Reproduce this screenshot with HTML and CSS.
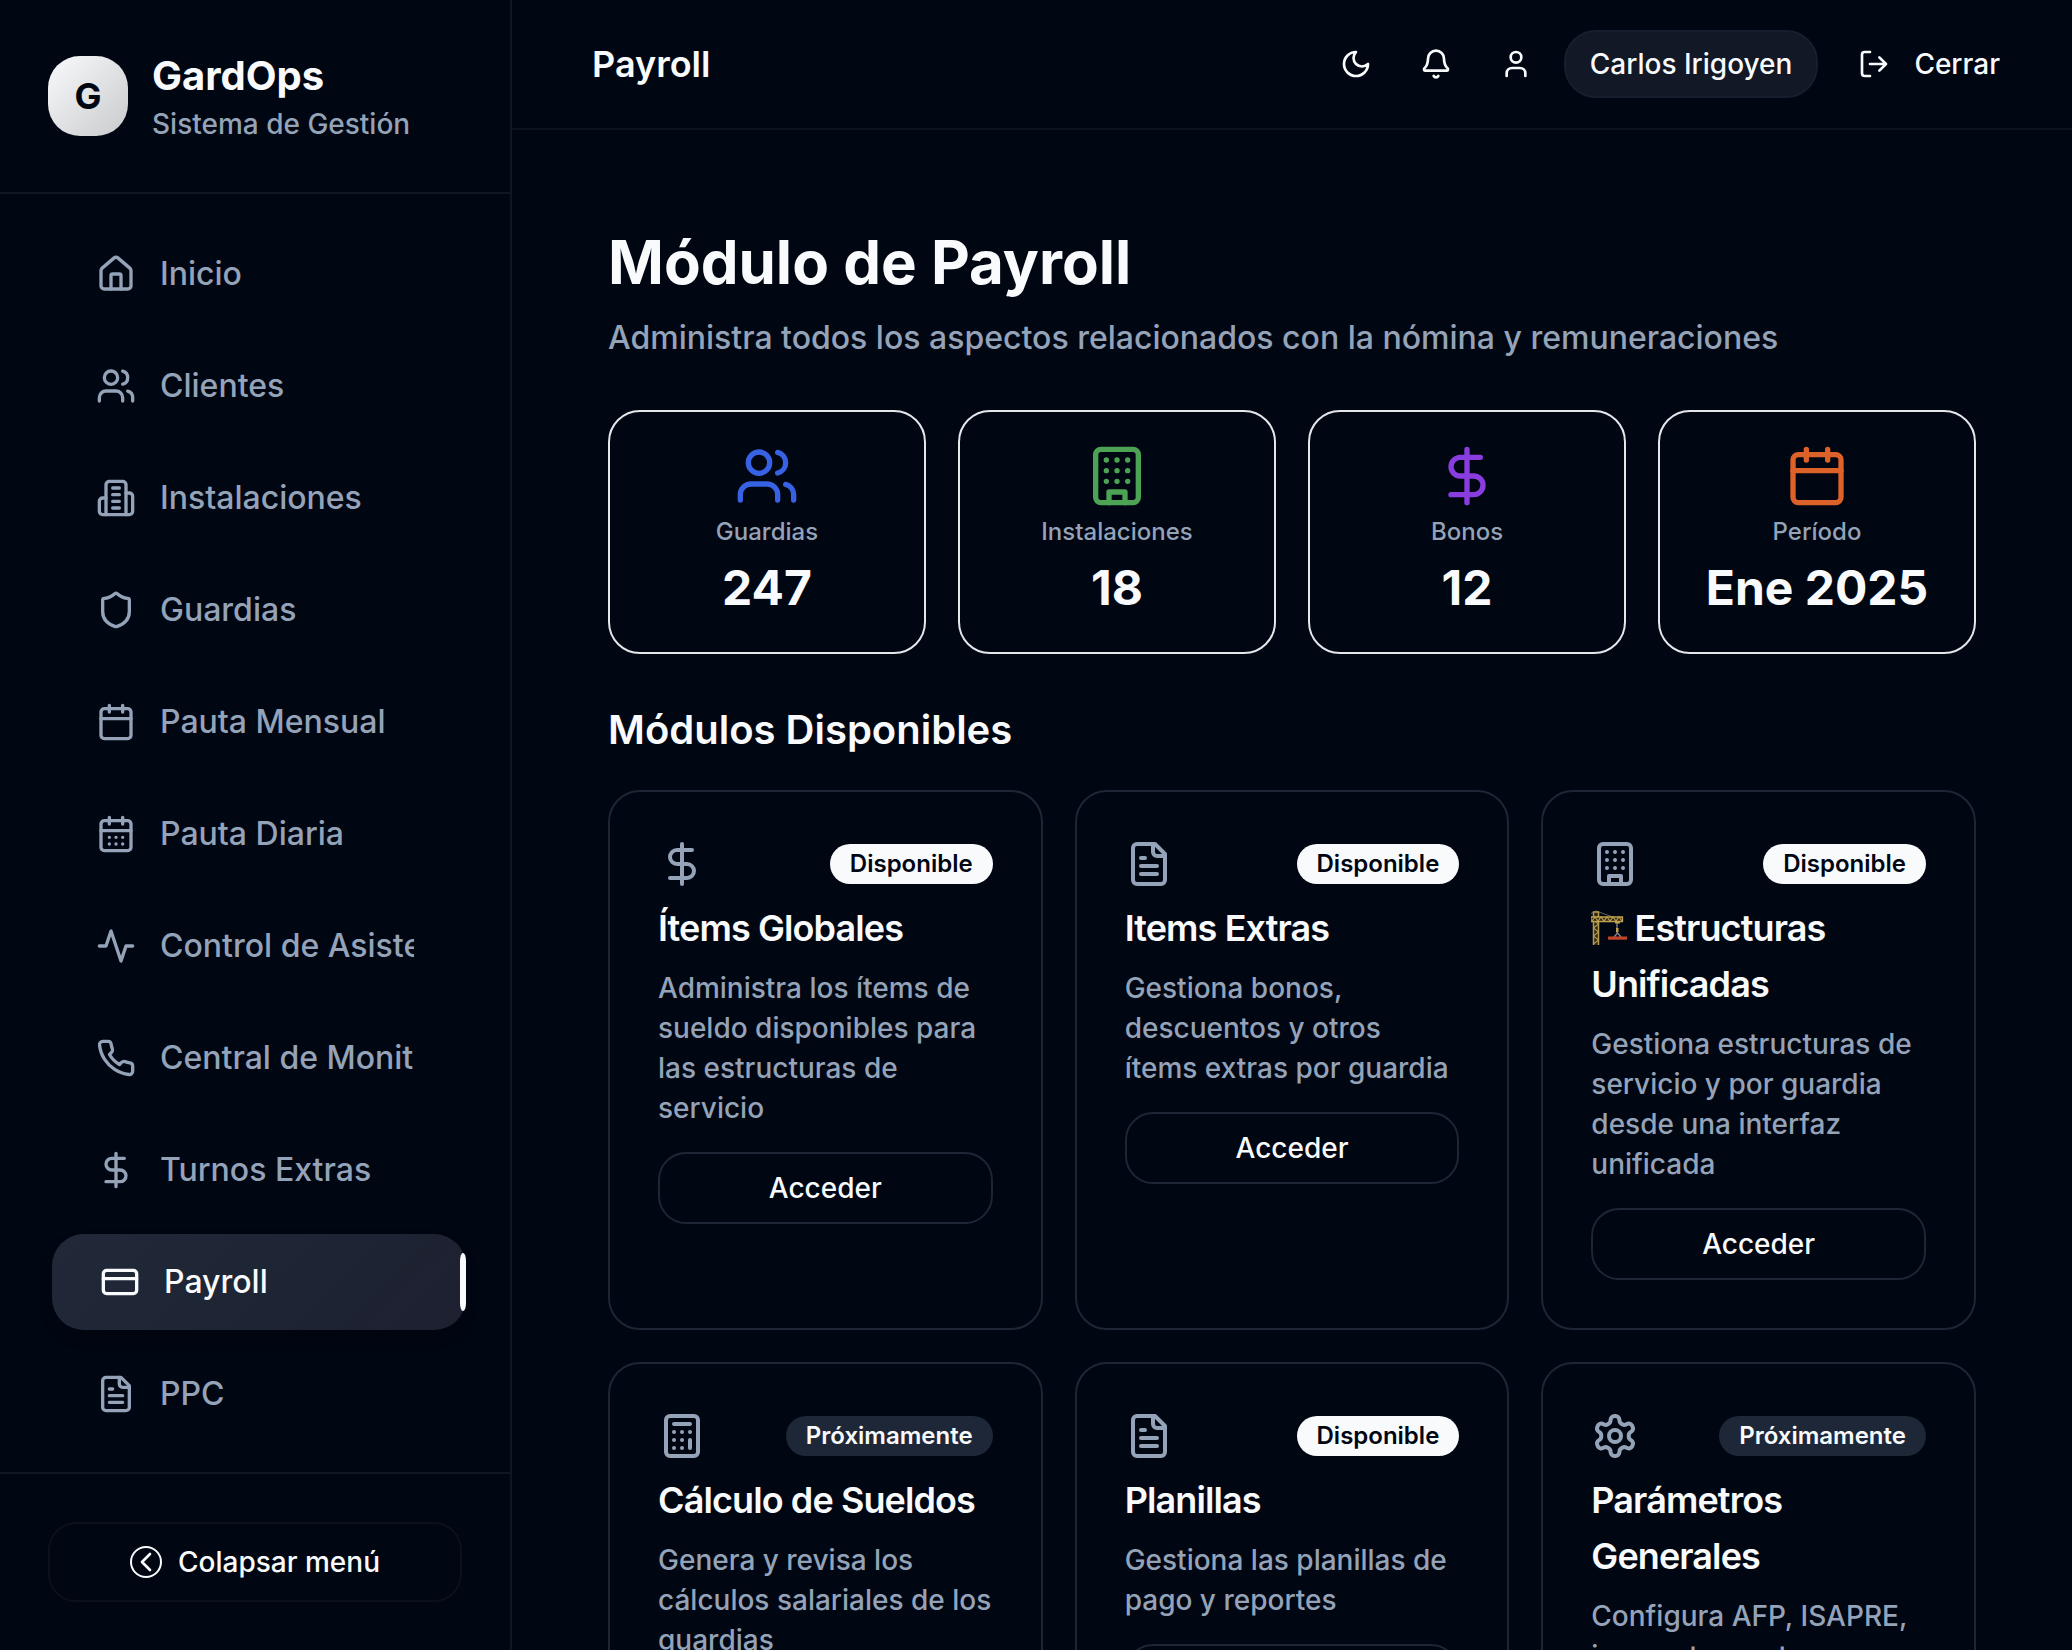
FILE: index.html
```html
<!DOCTYPE html>
<html lang="es">
<head>
<meta charset="utf-8">
<title>GardOps - Payroll</title>
<link rel="stylesheet" href="styles.css">
</head>
<body>
<svg class="sprite" aria-hidden="true">
  <symbol id="house" viewBox="0 0 24 24"><path d="M15 21v-8a1 1 0 0 0-1-1h-4a1 1 0 0 0-1 1v8"/><path d="M3 10a2 2 0 0 1 .709-1.528l7-5.999a2 2 0 0 1 2.582 0l7 5.999A2 2 0 0 1 21 10v9a2 2 0 0 1-2 2H5a2 2 0 0 1-2-2z"/></symbol>
  <symbol id="users" viewBox="0 0 24 24"><path d="M16 21v-2a4 4 0 0 0-4-4H6a4 4 0 0 0-4 4v2"/><circle cx="9" cy="7" r="4"/><path d="M22 21v-2a4 4 0 0 0-3-3.87"/><path d="M16 3.13a4 4 0 0 1 0 7.75"/></symbol>
  <symbol id="building2" viewBox="0 0 24 24"><path d="M6 22V4a2 2 0 0 1 2-2h8a2 2 0 0 1 2 2v18Z"/><path d="M6 12H4a2 2 0 0 0-2 2v6a2 2 0 0 0 2 2h2"/><path d="M18 9h2a2 2 0 0 1 2 2v9a2 2 0 0 1-2 2h-2"/><path d="M10 6h4M10 10h4M10 14h4M10 18h4"/></symbol>
  <symbol id="building" viewBox="0 0 24 24"><rect width="16" height="20" x="4" y="2" rx="2"/><path d="M9 22v-4h6v4M8 6h.01M16 6h.01M12 6h.01M12 10h.01M12 14h.01M16 10h.01M16 14h.01M8 10h.01M8 14h.01"/></symbol>
  <symbol id="shield" viewBox="0 0 24 24"><path d="M20 13c0 5-3.5 7.5-7.66 8.95a1 1 0 0 1-.67-.01C7.5 20.5 4 18 4 13V6a1 1 0 0 1 1-1c2 0 4.5-1.2 6.24-2.72a1.17 1.17 0 0 1 1.52 0C14.51 3.81 17 5 19 5a1 1 0 0 1 1 1z"/></symbol>
  <symbol id="calendar" viewBox="0 0 24 24"><path d="M8 2v4M16 2v4"/><rect width="18" height="18" x="3" y="4" rx="2"/><path d="M3 10h18"/></symbol>
  <symbol id="calendar-days" viewBox="0 0 24 24"><path d="M8 2v4M16 2v4"/><rect width="18" height="18" x="3" y="4" rx="2"/><path d="M3 10h18M8 14h.01M12 14h.01M16 14h.01M8 18h.01M12 18h.01M16 18h.01"/></symbol>
  <symbol id="activity" viewBox="0 0 24 24"><path d="M22 12h-4l-3 9L9 3l-3 9H2"/></symbol>
  <symbol id="phone" viewBox="0 0 24 24"><path d="M22 16.92v3a2 2 0 0 1-2.18 2 19.79 19.79 0 0 1-8.63-3.07 19.5 19.5 0 0 1-6-6 19.79 19.79 0 0 1-3.07-8.67A2 2 0 0 1 4.11 2h3a2 2 0 0 1 2 1.72 12.84 12.84 0 0 0 .7 2.81 2 2 0 0 1-.45 2.11L8.09 9.91a16 16 0 0 0 6 6l1.27-1.27a2 2 0 0 1 2.11-.45 12.84 12.84 0 0 0 2.81.7A2 2 0 0 1 22 16.92z"/></symbol>
  <symbol id="dollar" viewBox="0 0 24 24"><path d="M12 2v20M17 5H9.5a3.5 3.5 0 0 0 0 7h5a3.5 3.5 0 0 1 0 7H6"/></symbol>
  <symbol id="card" viewBox="0 0 24 24"><rect width="20" height="14" x="2" y="5" rx="2"/><path d="M2 10h20"/></symbol>
  <symbol id="file" viewBox="0 0 24 24"><path d="M15 2H6a2 2 0 0 0-2 2v16a2 2 0 0 0 2 2h12a2 2 0 0 0 2-2V7Z"/><path d="M14 2v4a2 2 0 0 0 2 2h4M10 9H8M16 13H8M16 17H8"/></symbol>
  <symbol id="calculator" viewBox="0 0 24 24"><rect width="16" height="20" x="4" y="2" rx="2"/><path d="M8 6h8M16 14v4M16 10h.01M12 10h.01M8 10h.01M12 14h.01M8 14h.01M12 18h.01M8 18h.01"/></symbol>
  <symbol id="settings" viewBox="0 0 24 24"><path d="M12.22 2h-.44a2 2 0 0 0-2 2v.18a2 2 0 0 1-1 1.73l-.43.25a2 2 0 0 1-2 0l-.15-.08a2 2 0 0 0-2.73.73l-.22.38a2 2 0 0 0 .73 2.73l.15.1a2 2 0 0 1 1 1.72v.51a2 2 0 0 1-1 1.74l-.15.09a2 2 0 0 0-.73 2.73l.22.38a2 2 0 0 0 2.73.73l.15-.08a2 2 0 0 1 2 0l.43.25a2 2 0 0 1 1 1.73V20a2 2 0 0 0 2 2h.44a2 2 0 0 0 2-2v-.18a2 2 0 0 1 1-1.73l.43-.25a2 2 0 0 1 2 0l.15.08a2 2 0 0 0 2.73-.73l.22-.39a2 2 0 0 0-.73-2.73l-.15-.08a2 2 0 0 1-1-1.74v-.5a2 2 0 0 1 1-1.74l.15-.09a2 2 0 0 0 .73-2.73l-.22-.38a2 2 0 0 0-2.73-.73l-.15.08a2 2 0 0 1-2 0l-.43-.25a2 2 0 0 1-1-1.73V4a2 2 0 0 0-2-2z"/><circle cx="12" cy="12" r="3"/></symbol>
  <symbol id="moon" viewBox="0 0 24 24"><path d="M12 3a6 6 0 0 0 9 9 9 9 0 1 1-9-9Z"/></symbol>
  <symbol id="bell" viewBox="0 0 24 24"><path d="M10.268 21a2 2 0 0 0 3.464 0"/><path d="M3.262 15.326A1 1 0 0 0 4 17h16a1 1 0 0 0 .74-1.673C19.41 13.956 18 12.499 18 8A6 6 0 0 0 6 8c0 4.499-1.411 5.956-2.738 7.326"/></symbol>
  <symbol id="user" viewBox="0 0 24 24"><path d="M19 21v-2a4 4 0 0 0-4-4H9a4 4 0 0 0-4 4v2"/><circle cx="12" cy="7" r="4"/></symbol>
  <symbol id="logout" viewBox="0 0 24 24"><path d="M9 21H5a2 2 0 0 1-2-2V5a2 2 0 0 1 2-2h4M16 17l5-5-5-5M21 12H9"/></symbol>
  <symbol id="collapse" viewBox="0 0 32 32"><circle cx="16" cy="16" r="15"/><path d="M20 8l-8 8 8 8" stroke-width="2.700"/></symbol>
</svg>
<div class="app">
  <aside class="sidebar">
    <div class="brand">
      <div class="brand-mark">G</div>
      <div>
        <div class="brand-name">GardOps</div>
        <div class="brand-sub">Sistema de Gestión</div>
      </div>
    </div>
    <nav class="nav">
      <a class="nav-item"><svg class="icon"><use href="#house"/></svg><span class="nav-label">Inicio</span></a>
      <a class="nav-item"><svg class="icon"><use href="#users"/></svg><span class="nav-label">Clientes</span></a>
      <a class="nav-item"><svg class="icon"><use href="#building2"/></svg><span class="nav-label">Instalaciones</span></a>
      <a class="nav-item"><svg class="icon"><use href="#shield"/></svg><span class="nav-label">Guardias</span></a>
      <a class="nav-item"><svg class="icon"><use href="#calendar"/></svg><span class="nav-label">Pauta Mensual</span></a>
      <a class="nav-item"><svg class="icon"><use href="#calendar-days"/></svg><span class="nav-label">Pauta Diaria</span></a>
      <a class="nav-item"><svg class="icon"><use href="#activity"/></svg><span class="nav-label">Control de Asistencia</span></a>
      <a class="nav-item"><svg class="icon"><use href="#phone"/></svg><span class="nav-label">Central de Monitoreo</span></a>
      <a class="nav-item"><svg class="icon"><use href="#dollar"/></svg><span class="nav-label">Turnos Extras</span></a>
      <a class="nav-item active"><svg class="icon"><use href="#card"/></svg><span class="nav-label">Payroll</span></a>
      <a class="nav-item"><svg class="icon"><use href="#file"/></svg><span class="nav-label">PPC</span></a>
    </nav>
    <div class="side-foot">
      <button class="collapse-btn"><svg class="icon collapse-icon"><use href="#collapse"/></svg>Colapsar menú</button>
    </div>
  </aside>
  <div class="content">
    <header class="topbar">
      <div class="topbar-title">Payroll</div>
      <div class="topbar-actions">
        <button class="icon-btn"><svg class="icon sm"><use href="#moon"/></svg></button>
        <button class="icon-btn"><svg class="icon sm"><use href="#bell"/></svg></button>
        <button class="icon-btn"><svg class="icon sm"><use href="#user"/></svg></button>
        <div class="user-pill">Carlos Irigoyen</div>
        <button class="logout"><svg class="icon sm"><use href="#logout"/></svg>Cerrar</button>
      </div>
    </header>
    <main class="main">
      <h1 class="page-title">Módulo de Payroll</h1>
      <p class="page-sub">Administra todos los aspectos relacionados con la nómina y remuneraciones</p>
      <section class="stats">
        <div class="stat"><svg class="icon xl blue"><use href="#users"/></svg><div class="stat-label">Guardias</div><div class="stat-value">247</div></div>
        <div class="stat"><svg class="icon xl green"><use href="#building"/></svg><div class="stat-label">Instalaciones</div><div class="stat-value">18</div></div>
        <div class="stat"><svg class="icon xl purple"><use href="#dollar"/></svg><div class="stat-label">Bonos</div><div class="stat-value">12</div></div>
        <div class="stat"><svg class="icon xl orange"><use href="#calendar"/></svg><div class="stat-label">Período</div><div class="stat-value">Ene 2025</div></div>
      </section>
      <h2 class="section-title">Módulos Disponibles</h2>
      <section class="modules">
        <article class="module">
          <div class="module-top"><svg class="icon lg"><use href="#dollar"/></svg><span class="badge">Disponible</span></div>
          <h3 class="module-title">Ítems Globales</h3>
          <p class="module-desc">Administra los ítems de sueldo disponibles para las estructuras de servicio</p>
          <button class="access">Acceder</button>
        </article>
        <article class="module">
          <div class="module-top"><svg class="icon lg"><use href="#file"/></svg><span class="badge">Disponible</span></div>
          <h3 class="module-title">Items Extras</h3>
          <p class="module-desc">Gestiona bonos, descuentos y otros ítems extras por guardia</p>
          <button class="access">Acceder</button>
        </article>
        <article class="module">
          <div class="module-top"><svg class="icon lg"><use href="#building"/></svg><span class="badge">Disponible</span></div>
          <h3 class="module-title"><svg class="crane" viewBox="0 0 36 36"><path d="M0 3.500L5 1l17 6" fill="none" stroke="#66645f" stroke-width="1"/><path d="M2.500 35V2h5v33" fill="#2b2618" stroke="#b39a52" stroke-width="1.500"/><path d="M2.500 34l5-4-5-4 5-4-5-4 5-4-5-4 5-4" fill="none" stroke="#b39a52" stroke-width="1.200"/><path d="M0 7h31.500v4.500H0z" fill="#2b2618" stroke="#c0a14c" stroke-width="1.300"/><path d="M1 11l3-4 3 4 3-4 3 4 3-4 3 4 3-4 3 4 3-4 3 4" fill="none" stroke="#c0a14c" stroke-width="1.200"/><path d="M26 12v11M23 27l3.500-4 3.500 4" fill="none" stroke="#85878c" stroke-width="1.300"/><path d="M24 11h5v2.500h-5zM25 18h2.500v4H25z" fill="#c0a14c"/><path d="M17 26.500h19v3.200H17z" fill="#c0452b"/></svg> Estructuras Unificadas</h3>
          <p class="module-desc">Gestiona estructuras de servicio y por guardia desde una interfaz unificada</p>
          <button class="access">Acceder</button>
        </article>
        <article class="module">
          <div class="module-top"><svg class="icon lg"><use href="#calculator"/></svg><span class="badge soon">Próximamente</span></div>
          <h3 class="module-title">Cálculo de Sueldos</h3>
          <p class="module-desc">Genera y revisa los cálculos salariales de los guardias</p>
          <button class="access">Acceder</button>
        </article>
        <article class="module">
          <div class="module-top"><svg class="icon lg"><use href="#file"/></svg><span class="badge">Disponible</span></div>
          <h3 class="module-title">Planillas</h3>
          <p class="module-desc">Gestiona las planillas de pago y reportes</p>
          <button class="access">Acceder</button>
        </article>
        <article class="module">
          <div class="module-top"><svg class="icon lg"><use href="#settings"/></svg><span class="badge soon">Próximamente</span></div>
          <h3 class="module-title">Parámetros Generales</h3>
          <p class="module-desc">Configura AFP, ISAPRE, impuestos y otros parámetros</p>
          <button class="access">Acceder</button>
        </article>
      </section>
    </main>
  </div>
</div>
</body>
</html>
```

FILE: styles.css
```css
* { box-sizing: border-box; margin: 0; padding: 0; }
body { background: #010613; color: #f8fafc; font-family: Inter, "Liberation Sans", sans-serif; font-size: 32px; font-weight: 500; overflow: hidden; -webkit-font-smoothing: antialiased; }
button { font: inherit; color: inherit; background: none; border: 0; }
.sprite { display: none; }
.app { display: flex; height: 1650px; overflow: hidden; }

.icon { width: 40px; height: 40px; flex: none; display: block; fill: none; stroke: currentColor; stroke-width: 2; stroke-linecap: round; stroke-linejoin: round; }
.icon.sm { width: 32px; height: 32px; }
.icon.lg { width: 48px; height: 48px; }
.icon.xl { width: 64px; height: 64px; }
.blue { color: #3662e3; }
.green { color: #4da354; }
.purple { color: #8a3ddf; }
.orange { color: #dc6229; }

.sidebar { width: 512px; flex: none; display: flex; flex-direction: column; border-right: 2px solid #111722; }
.brand { display: flex; align-items: center; gap: 24px; height: 194px; padding: 0 48px; border-bottom: 2px solid #111722; }
.brand-mark { width: 80px; height: 80px; border-radius: 32px; display: grid; place-items: center; color: #010613; font-size: 36px; font-weight: 700; background: linear-gradient(135deg, #f8fafc, #c9cacc); }
.brand-name { font-size: 40px; line-height: 56px; font-weight: 700; }
.brand-sub { font-size: 28px; line-height: 40px; color: #94a3b8; }
.nav { flex: 1; min-height: 0; overflow: hidden; padding: 32px 48px; display: flex; flex-direction: column; gap: 16px; }
.nav-item { position: relative; flex: none; display: flex; align-items: center; gap: 24px; height: 96px; padding: 0 48px; border-radius: 32px; color: #94a3b8; }
.nav-label { flex: 1; overflow: hidden; white-space: nowrap; line-height: 48px; }
.nav-item.active { transform: translateX(4px); color: #f8fafc; background: linear-gradient(135deg, #212938, #1d2433 60%, #1e2030); box-shadow: 0 8px 16px -4px rgba(0, 0, 0, 0.25); }
.nav-item.active::after { content: ""; position: absolute; right: 0; top: 20%; width: 6px; height: 60%; border-radius: 3px / 8px; background: #f8fafc; }
.side-foot { height: 178px; padding: 48px; border-top: 2px solid #111722; }
.collapse-btn { width: 100%; height: 80px; display: flex; align-items: center; justify-content: center; gap: 16px; border: 2px solid #0b101c; border-radius: 28px; font-size: 28px; }
.collapse-icon { width: 32px; height: 32px; }

.content { flex: 1; min-width: 0; display: flex; flex-direction: column; }
.topbar { flex: none; height: 130px; display: flex; align-items: center; justify-content: space-between; padding: 0 48px 0 80px; border-bottom: 2px solid #0d131e; }
.topbar-title { font-size: 36px; font-weight: 600; }
.topbar-actions { display: flex; align-items: center; gap: 16px; font-size: 28px; }
.icon-btn { width: 64px; height: 64px; display: grid; place-items: center; }
.user-pill { height: 68px; padding: 0 24px; display: flex; align-items: center; background: #121826; border: 2px solid #171e2d; border-radius: 32px; }
.logout { display: flex; align-items: center; gap: 24px; padding: 0 24px; height: 64px; }

.main { flex: 1; min-height: 0; padding: 96px; }
.page-title { font-size: 60px; line-height: 72px; font-weight: 700; }
.page-sub { line-height: 48px; margin-top: 16px; color: #94a3b8; }
.stats { display: grid; grid-template-columns: repeat(4, 1fr); gap: 32px; margin-top: 48px; }
.stat { height: 244px; display: flex; flex-direction: column; align-items: center; padding-top: 32px; border: 2px solid #e5e7eb; border-radius: 32px; }
.stat-label { margin-top: 8px; font-size: 24px; line-height: 32px; color: #94a3b8; }
.stat-value { margin-top: 8px; font-size: 48px; line-height: 64px; font-weight: 700; }
.section-title { margin-top: 48px; font-size: 40px; line-height: 56px; font-weight: 600; }
.modules { display: grid; grid-template-columns: repeat(3, 1fr); gap: 32px; margin-top: 32px; }
.module { padding: 48px; border: 2px solid #1e2636; border-radius: 32px; }
.module-top { display: flex; align-items: center; justify-content: space-between; color: #94a3b8; }
.badge { height: 40px; padding: 0 20px; border-radius: 20px; background: #f8fafc; color: #010613; font-size: 24px; line-height: 40px; font-weight: 600; }
.badge.soon { background: #1e2737; color: #f8fafc; }
.module-title { margin-top: 12px; font-size: 36px; line-height: 56px; font-weight: 600; letter-spacing: -0.025em; }
.crane { width: 36px; height: 36px; vertical-align: -5px; margin-right: -1px; }
.module-desc { margin-top: 12px; font-size: 28px; line-height: 40px; color: #94a3b8; }
.access { display: block; width: 100%; height: 72px; margin-top: 24px; border: 2px solid #1e2636; border-radius: 28px; font-size: 28px; }
```
